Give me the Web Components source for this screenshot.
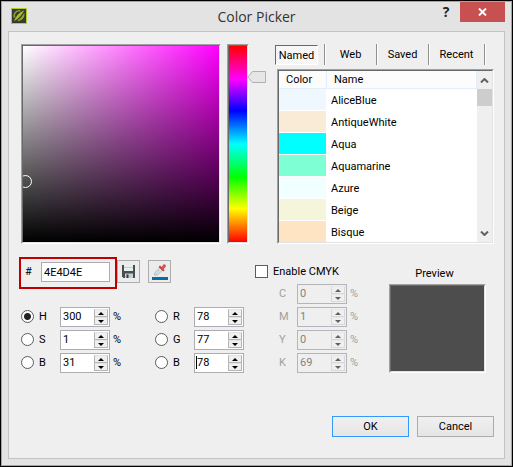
<!DOCTYPE html>
<html lang="en">
<head>
<meta charset="utf-8">
<title>Color Picker</title>
<style>
html, body { margin: 0; }
body { font: 11px/14px Roboto, "Noto Sans", sans-serif; color: #000; background: #e3e3e3; }
</style>
</head>
<body>
<picker-dialog heading="Color Picker">
  <color-field></color-field>
  <hue-slider></hue-slider>
  <color-library></color-library>
  <channel-panel slot="lower"></channel-panel>
  <cmyk-panel slot="lower"></cmyk-panel>
  <dialog-button slot="actions" primary>OK</dialog-button>
  <dialog-button slot="actions">Cancel</dialog-button>
</picker-dialog>

<script>
const define = (name, html, setup) => {
  const template = document.createElement('template');
  template.innerHTML = '<style>*{box-sizing:border-box}</style>' + html;
  customElements.define(name, class extends HTMLElement {
    connectedCallback() {
      if (this.shadowRoot) return;
      const root = this.attachShadow({ mode: 'open' });
      root.append(template.content.cloneNode(true));
      if (setup) setup(this, root);
    }
  });
};

const sunken = 'border:1px solid;border-color:#a0a0a0 #fff #fff #a0a0a0;';
const sunkenInner = 'border:1px solid;border-color:#696969 #e3e3e3 #e3e3e3 #696969;';

define('picker-dialog', `
<style>
:host { display: flex; flex-direction: column; box-sizing: border-box; min-height: 100vh; background: #e3e3e3; border: 1px solid #000; }
.frame { flex: 1; display: flex; flex-direction: column; border: 1px solid #a5a5a5; padding: 0 6px 6px; }
header { display: grid; grid-template-columns: 1fr auto 1fr; height: 29px; }
.logo { width: 16px; height: 16px; margin: 6px 0 0 3px; }
h1 { margin: 5px 0 0; font: 14px/20px "Open Sans", sans-serif; color: #333; }
.tools { display: flex; justify-content: flex-end; align-items: flex-start; }
.tools button { border: 0; padding: 0; height: 20px; background: none; display: flex; align-items: center; justify-content: center; }
.help { width: 28px; font: bold 14px/20px "Open Sans", sans-serif; color: #222; }
.tools .close { width: 45px; background: #c75050; }
main { flex: 1; border: 1px solid #c3c3c3; background: #efefef; padding: 12px 10px 21px; display: flex; flex-direction: column; }
.upper { display: grid; grid-template-columns: minmax(0, 1fr) 22px 239px; column-gap: 6px; padding-left: 2px; }
.lower { display: grid; grid-template-columns: minmax(0, 1fr) 239px; column-gap: 10px; margin-top: 13px; }
::slotted(color-library) { margin-left: 20px; }
footer { margin-top: auto; display: flex; justify-content: flex-end; gap: 8px; }
</style>
<div class="frame">
  <header>
    <svg class="logo" viewBox="0 0 16 16" aria-hidden="true"><rect x=".5" y=".5" width="15" height="15" fill="#353b35" stroke="#b4cc28"/><path d="M9.500 3A5 5 0 0 0 3.600 9.800" fill="none" stroke="#8a9c35" stroke-width="1.600"/><path d="M2.800 13.300C4.500 8.500 8 4.500 13.200 2.200C11.500 6 8 10.500 2.800 13.300Z" fill="#a9c02a"/><path d="M6 12.800C9.500 10.500 12 7.500 13.200 4.800C14.400 9 11 13.600 6 12.800Z" fill="#96aa2f"/></svg>
    <h1></h1>
    <div class="tools">
      <button class="help" type="button" aria-label="Help">?</button>
      <button class="close" type="button" aria-label="Close"><svg width="9" height="8" viewBox="0 0 9 8"><path d="M1 .5 8 7.500M8 .5 1 7.500" stroke="#fff" stroke-width="1.900"/></svg></button>
    </div>
  </header>
  <main>
    <div class="upper"><slot></slot></div>
    <div class="lower"><slot name="lower"></slot></div>
    <footer><slot name="actions"></slot></footer>
  </main>
</div>`, (host, root) => {
  root.querySelector('h1').textContent = host.getAttribute('heading');
});

define('color-field', `
<style>
:host { display: block; height: 200px; box-sizing: border-box; ${sunken} }
.area { position: relative; overflow: hidden; height: 100%; ${sunkenInner} background: linear-gradient(to bottom, transparent, #000), linear-gradient(to right, #fff, #f0f); }
.mark { position: absolute; left: -4px; top: 129px; width: 13px; height: 13px; border: 1px solid #fff; border-radius: 50%; }
</style>
<div class="area"><div class="mark"></div></div>`);

define('hue-slider', `
<style>
:host { display: block; position: relative; height: 200px; box-sizing: border-box; ${sunken} }
.strip { height: 100%; ${sunkenInner} background: linear-gradient(to bottom, #f00, #f0f 17%, #00f 33%, #0ff 50%, #0f0 67%, #ff0 83%, #f00); }
svg { position: absolute; left: 19px; top: 26px; }
</style>
<div class="strip"></div>
<svg width="19" height="12" viewBox="0 0 19 12" aria-hidden="true"><path d="M.8 6 5.500 .5H18.500V11.500H5.500Z" fill="#e6e6e6" stroke="#b0b0b0"/></svg>`);

const named = [
  ['AliceBlue', '#f0f8ff'], ['AntiqueWhite', '#faebd7'], ['Aqua', '#00ffff'], ['Aquamarine', '#7fffd4'],
  ['Azure', '#f0ffff'], ['Beige', '#f5f5dc'], ['Bisque', '#ffe4c4']
];

define('color-library', `
<style>
:host { display: flex; flex-direction: column; height: 200px; }
nav { display: flex; height: 21px; line-height: 16px; margin-right: 9px; }
nav button { font: inherit; border: 0; background: none; padding: 0; height: 21px; color: #000; border-right: 1px solid #909090; box-shadow: 1px 0 #fff; flex: 52 1 0; }
nav button:last-child { flex-grow: 56; }
nav .on { flex: none; width: 50px; padding: 0 6px 0 0; }
.on span { display: block; height: 20px; line-height: 19px; border: 1px solid; border-color: #696969 #fff #fff #696969; background: repeating-conic-gradient(#fff 0 25%, #efefef 0 50%) 0 0 / 2px 2px; }
.list { flex: 1; min-height: 0; margin: 4px 0 0 2px; ${sunken} }
.inner { height: 100%; display: flex; align-items: flex-start; overflow: hidden; background: #fff; ${sunkenInner} }
table { flex: 1; border-collapse: separate; border-spacing: 0; table-layout: fixed; width: 0; }
th { font-weight: 400; text-align: left; height: 18px; padding: 1px 0 0 7px; background: #fcfcfc; border-right: 1px solid #e3eefb; border-bottom: 1px solid #e3eefb; }
th:first-child { width: 48px; }
td { height: 22px; padding: 2px 0 0 4px; border-bottom: 1px solid #fff; background-clip: padding-box; }
td:first-child { border-right: 1px solid #fff; }
.bar { align-self: stretch; width: 15px; background: #efefef; display: flex; flex-direction: column; align-items: center; }
.bar i { width: 15px; height: 17px; background: #cdcdcd; margin-bottom: auto; }
.bar svg { display: block; flex: none; margin: 7px 0 6px; }
</style>
<nav aria-label="Color lists"><button class="on" type="button"><span>Named</span></button><button type="button">Web</button><button type="button">Saved</button><button type="button">Recent</button></nav>
<div class="list"><div class="inner">
  <table><thead><tr><th>Color</th><th>Name</th></tr></thead><tbody></tbody></table>
  <div class="bar">
    <svg width="9" height="5" viewBox="0 0 9 5"><path d="M1 4.500 4.500 1 8 4.500" fill="none" stroke="#606060" stroke-width="2"/></svg>
    <i></i>
    <svg width="9" height="5" viewBox="0 0 9 5"><path d="M1 .5 4.500 4 8 .5" fill="none" stroke="#606060" stroke-width="2"/></svg>
  </div>
</div></div>`, (host, root) => {
  root.querySelector('tbody').innerHTML = named.map(([n, c]) =>
    `<tr><td style="background-color:${c}"></td><td>${n}</td></tr>`).join('');
});

define('spin-box', `
<style>
:host { display: flex; width: 50px; height: 20px; box-sizing: border-box; border: 1px solid #abadb3; background: #fff; padding: 1px; position: relative; }
input { flex: 1; min-width: 0; font: inherit; color: inherit; border: 0; outline: 0; background: none; padding: 0 0 0 1px; }
.steps { width: 14px; display: flex; flex-direction: column; }
button { flex: 1; padding: 0; border: 1px solid #b4b4b4; border-top-color: #e3e3e3; background: #efefef; display: flex; align-items: center; justify-content: center; color: #000; }
:host([disabled]) { background: #efefef; border-color: #b4b4ba; color: #838383; }
:host([disabled]) button { color: #606060; border-color: #d8d8d8; border-top-color: #e8e8e8; }
.caret { display: none; position: absolute; left: 1px; top: 2px; width: 1px; height: 13px; background: #000; }
:host([caret]) .caret { display: block; }
</style>
<input type="text"><span class="caret"></span>
<div class="steps">
  <button type="button" aria-label="Increase"><svg width="6" height="3" viewBox="0 0 6 3"><path d="M0 3 3 0 6 3Z" fill="currentColor"/></svg></button>
  <button type="button" aria-label="Decrease"><svg width="6" height="3" viewBox="0 0 6 3"><path d="M0 0 3 3 6 0Z" fill="currentColor"/></svg></button>
</div>`, (host, root) => {
  const input = root.querySelector('input');
  input.value = host.getAttribute('value');
  input.setAttribute('aria-label', host.getAttribute('label'));
  if (host.hasAttribute('disabled')) root.querySelectorAll('input, button').forEach(e => e.disabled = true);
});

define('channel-panel', `
<style>
:host { display: block; }
.hex { display: flex; align-items: flex-start; }
.code { width: 98px; height: 32px; border: 2px solid #c00000; display: flex; align-items: center; justify-content: space-between; padding: 0 5px 2px 4px; }
.code label { width: auto; }
.code input { width: 69px; height: 20px; font: inherit; color: #000; border: 1px solid #abadb3; background: #fff; padding: 0 2px; outline: 0; }
.tool { width: 23px; height: 23px; margin: 3px 8px 0 0; padding: 0; border: 1px solid #adadad; background: #ececec; display: flex; align-items: center; justify-content: center; }
.grid { display: grid; grid-template-columns: 134px auto; justify-content: start; row-gap: 3px; margin-top: 18px; }
.ch { display: flex; align-items: center; padding-left: 2px; height: 20px; }
label { display: flex; align-items: center; gap: 5px; width: 39px; }
input[type=radio] { appearance: none; flex: none; margin: 0 0 2px; width: 13px; height: 13px; border: 1px solid #5c5c5c; border-radius: 50%; background: #fff; }
input[type=radio]:checked { background: radial-gradient(circle, #222 0 3px, #fff 4px); }
.unit { margin-left: 3px; }
</style>
<div class="hex">
  <div class="code"><label for="hex">#</label><input id="hex" type="text" value="4E4D4E"></div>
  <button class="tool" type="button" aria-label="Save color"><svg width="15" height="15" viewBox="0 0 15 15"><path d="M1 1H14V14H2.500L1 12.500Z" fill="#494e52"/><path d="M3 1H12V7H3Z" fill="#e9eef0"/><path d="M3 3.500H12" stroke="#c5cccf"/><path d="M4 9.500H12V14H4Z" fill="#c8cdd0"/><path d="M5.500 10.500H7.500V14H5.500Z" fill="#35393c"/></svg></button>
  <button class="tool" type="button" aria-label="Pick screen color"><svg width="17" height="17" viewBox="0 0 17 17"><path d="M1 14H17V17H1Z" fill="#0b6c9e"/><path d="M3.500 12 4 9.500 9 4.800 11.400 7.200 6.500 11.800Z" fill="#e8eef1" stroke="#9aa8b2" stroke-width=".8"/><path d="M5 10.800 8.800 7" stroke="#b8d8e8" stroke-width="1.300"/><path d="M8.300 3.300 12.900 7.900" stroke="#b8423f" stroke-width="2"/><path d="M10 4.500 12.500 1.500C13.500 .3 16 2.500 14.500 4L12 6.700Z" fill="#d65552"/></svg></button>
</div>
<div class="grid"></div>`, (host, root) => {
  root.querySelector('.grid').innerHTML = [
    ['H', 300, '%', 'checked'], ['R', 78], ['S', 1, '%'], ['G', 77], ['B', 31, '%'], ['B', 78, '', '', 'caret']
  ].map(([name, value, unit = '', checked = '', caret = '']) =>
    `<div class="ch"><label><input type="radio" name="channel" ${checked}>${name}</label><spin-box label="${name}" value="${value}" ${caret}></spin-box>${unit && `<span class="unit">${unit}</span>`}</div>`).join('');
});

define('cmyk-panel', `
<style>
:host { display: grid; grid-template-columns: 106px minmax(0, 1fr); column-gap: 28px; padding: 8px 8px 0 0; }
.toggle { display: flex; align-items: center; gap: 5px; height: 13px; white-space: nowrap; }
input { appearance: none; margin: 0; width: 13px; height: 13px; border: 1px solid #5c5c5c; background: #fff; }
.rows { display: grid; row-gap: 3px; margin-top: 6px; padding-left: 24px; color: #a0a0a0; }
.row { display: flex; align-items: center; height: 20px; }
.row span:first-child { width: 18px; flex: none; }
.row spin-box { flex: none; }
.unit { margin-left: 3px; }
figure { margin: 0; display: flex; flex-direction: column; }
figcaption { text-align: center; height: 19px; line-height: 18px; padding-right: 6px; }
.swatch { height: 89px; ${sunken} }
.swatch div { height: 100%; background: #4e4d4e; ${sunkenInner} }
</style>
<div>
  <label class="toggle"><input type="checkbox">Enable CMYK</label>
  <div class="rows"></div>
</div>
<figure><figcaption>Preview</figcaption><div class="swatch"><div></div></div></figure>`, (host, root) => {
  root.querySelector('.rows').innerHTML = [['C', 0], ['M', 1], ['Y', 0], ['K', 69]].map(([n, v]) =>
    `<div class="row"><span>${n}</span><spin-box label="${n}" value="${v}" disabled></spin-box><span class="unit">%</span></div>`).join('');
});

define('dialog-button', `
<style>
:host { display: block; }
button { width: 77px; height: 21px; padding: 0; font: inherit; color: #000; border: 1px solid #acacac; background: linear-gradient(#f0f0f0, #e5e5e5); }
:host([primary]) button { border-color: #3399ff; }
</style>
<button type="button"><slot></slot></button>`);
</script>
</body>
</html>
